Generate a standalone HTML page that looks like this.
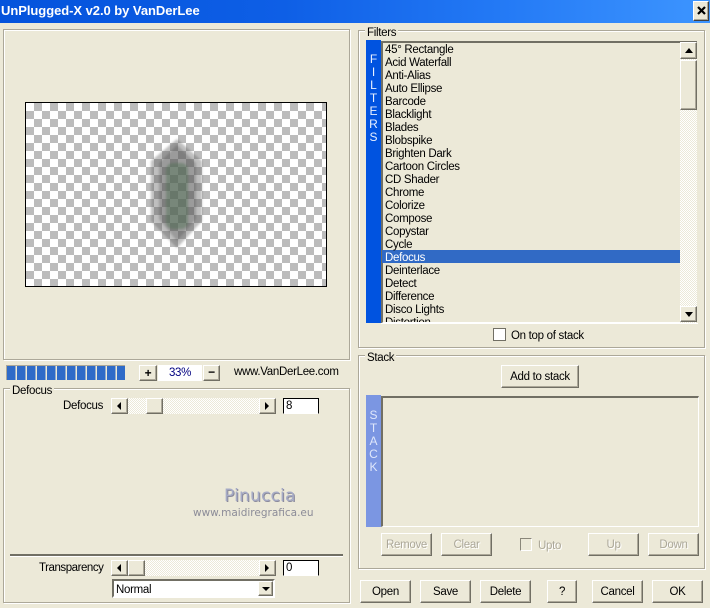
<!DOCTYPE html>
<html><head><meta charset="utf-8"><style>
html,body{margin:0;padding:0}
body{width:710px;height:608px;background:#ece9d8;position:relative;overflow:hidden;font:11.5px/13px "Liberation Sans",sans-serif;letter-spacing:-.3px;color:#000}
div,span{position:absolute;box-sizing:border-box;white-space:nowrap}
.g{border:1px solid #aca899;box-shadow:inset 1px 1px 0 #fff,1px 1px 0 #fff}
.lg{background:#ece9d8;padding:0 2px;height:13px}
.b{background:#ece9d8;border:1px solid;border-color:#fff #716f64 #716f64 #fff;box-shadow:inset -1px -1px 0 #aca899;text-align:center}
.d{color:#aca899;text-shadow:1px 1px 0 #fff}
.track{background:repeating-conic-gradient(#fff 0 25%,#ece9d8 0 50%) 0 0/2px 2px}
.in{background:#fff;border:1px solid;border-color:#000 #000 #fff #000}
.i{left:385px;height:13px;line-height:13px}
svg{position:absolute;left:0;top:0}
</style></head><body>
<div style="left:0;top:0;width:710px;height:23px;background:linear-gradient(90deg,#0453dc 0,#0e5fe6 40%,#2379f5 70%,#3d95ff 100%)"></div>
<div style="left:1px;top:3px;color:#fff;font:bold 13px/15px 'Liberation Sans',sans-serif;letter-spacing:-.05px">UnPlugged-X v2.0 by VanDerLee</div>
<div class="b" style="left:693px;top:1px;width:16px;height:20px;border-color:#fff #404040 #404040 #fff"></div>
<svg width="710" height="23" style="z-index:2"><path d="M698 7l7 7M705 7l-7 7" stroke="#000" stroke-width="2.2" fill="none"/></svg>

<div class="g" style="left:3px;top:29px;width:347px;height:331px"></div>
<div style="left:25px;top:102px;width:302px;height:185px;border:1px solid #000;background:repeating-conic-gradient(#bcbcbc 0 25%,#fff 0 50%) 0 0/16px 16px;background-color:#fff;overflow:hidden">
<svg width="300" height="183"><defs><filter id="f" x="-30%" y="-30%" width="160%" height="160%"><feGaussianBlur stdDeviation="1"/></filter><filter id="h" x="-30%" y="-30%" width="160%" height="160%"><feGaussianBlur stdDeviation="1"/></filter></defs>
<path d="M151 36L125 58V118L151 145L176 118V58Z" fill="#5a5a5a" opacity=".38" filter="url(#h)"/>
<path d="M151 42L133 60V116L151 138L170 116V60Z" fill="#4a4a4a" opacity=".3" filter="url(#f)"/>
<rect x="140" y="60" width="22" height="66" rx="7" fill="#4f6f52" opacity=".45" filter="url(#f)"/>
</svg></div>

<div style="left:6px;top:365px;width:119px;height:15px;background:#fff;box-shadow:inset 1px 1px 0 #aca899"></div>
<div style="left:7px;top:366px;width:118px;height:14px;background:repeating-linear-gradient(90deg,#2f6bc8 0 8.500px,#ece9d8 8.500px 10px)"></div>
<div class="b" style="left:139px;top:365px;width:18px;height:16px;font:bold 12px/14px 'Liberation Sans',sans-serif">+</div>
<div style="left:158px;top:365px;width:44px;height:16px;background:#fff;color:#000080;text-align:center;line-height:16px">33%</div>
<div class="b" style="left:203px;top:365px;width:17px;height:16px;font:bold 12px/13px 'Liberation Sans',sans-serif">−</div>
<div style="left:234px;top:366px">www.VanDerLee.com</div>

<div class="g" style="left:3px;top:388px;width:347px;height:215px"></div>
<div class="lg" style="left:10px;top:385px">Defocus</div>
<div style="left:63px;top:400px">Defocus</div>
<div class="track" style="left:128px;top:398px;width:131px;height:16px"></div>
<div class="b" style="left:111px;top:398px;width:17px;height:16px"></div>
<div class="b" style="left:146px;top:398px;width:17px;height:16px"></div>
<div class="b" style="left:259px;top:398px;width:17px;height:16px"></div>
<div class="in" style="left:283px;top:398px;width:36px;height:16px;padding-left:2px;line-height:15px">8</div>

<div style="left:224px;top:486px;color:#a6abc6;font:17px/20px 'DejaVu Sans',sans-serif;letter-spacing:.2px;text-shadow:1px 1px 0 #8a8a9c">Pinuccia</div>
<div style="left:193px;top:507px;color:#8c8c98;font:10.5px/13px 'DejaVu Sans',sans-serif;letter-spacing:0">www.maidiregrafica.eu</div>

<div style="left:10px;top:554px;width:333px;height:2px;background:#716f64;box-shadow:0 1px 0 #fff"></div>
<div style="left:39px;top:562px;letter-spacing:-.45px">Transparency</div>
<div class="track" style="left:128px;top:560px;width:131px;height:16px"></div>
<div class="b" style="left:111px;top:560px;width:17px;height:16px"></div>
<div class="b" style="left:128px;top:560px;width:17px;height:16px"></div>
<div class="b" style="left:259px;top:560px;width:17px;height:16px"></div>
<div class="in" style="left:283px;top:560px;width:36px;height:16px;padding-left:2px;line-height:15px">0</div>
<div style="left:112px;top:579px;width:163px;height:19px;background:#fff;border:2px solid;border-color:#716f64 #fff #fff #716f64;padding-left:2px;line-height:18px">Normal</div>
<div class="b" style="left:258px;top:581px;width:15px;height:15px"></div>

<div class="g" style="left:358px;top:30px;width:347px;height:318px"></div>
<div class="lg" style="left:365px;top:26px;line-height:15px">Filters</div>
<div style="left:366px;top:40px;width:15px;height:283px;background:#0053e0"></div>
<div style="left:366px;top:53px;width:15px;color:#e8f0ff;text-align:center;font-size:12px;line-height:13px;white-space:normal;letter-spacing:0">F<br>I<br>L<br>T<br>E<br>R<br>S</div>
<div style="left:381px;top:41px;width:316px;height:283px;border:2px solid;border-color:#716f64 #ece9d8 #fff #716f64;border-right:0;overflow:hidden"></div>
<div style="left:382px;top:250px;width:298px;height:13px;background:#316ac5"></div>
<div style="left:0;top:0;width:697px;height:322px;overflow:hidden">
<div class="i" style="top:44px">45° Rectangle</div><div class="i" style="top:57px">Acid Waterfall</div><div class="i" style="top:70px">Anti-Alias</div><div class="i" style="top:83px">Auto Ellipse</div><div class="i" style="top:96px">Barcode</div><div class="i" style="top:109px">Blacklight</div><div class="i" style="top:122px">Blades</div><div class="i" style="top:135px">Blobspike</div><div class="i" style="top:148px">Brighten Dark</div><div class="i" style="top:161px">Cartoon Circles</div><div class="i" style="top:174px">CD Shader</div><div class="i" style="top:187px">Chrome</div><div class="i" style="top:200px">Colorize</div><div class="i" style="top:213px">Compose</div><div class="i" style="top:226px">Copystar</div><div class="i" style="top:239px">Cycle</div><div class="i" style="top:252px;color:#fff">Defocus</div><div class="i" style="top:265px">Deinterlace</div><div class="i" style="top:278px">Detect</div><div class="i" style="top:291px">Difference</div><div class="i" style="top:304px">Disco Lights</div><div class="i" style="top:317px">Distortion</div>
</div>
<div class="track" style="left:680px;top:42px;width:17px;height:281px"></div>
<div class="b" style="left:680px;top:42px;width:17px;height:17px"></div>
<div class="b" style="left:680px;top:60px;width:17px;height:50px"></div>
<div class="b" style="left:680px;top:306px;width:17px;height:16px"></div>
<div style="left:381px;top:323px;width:317px;height:1px;background:#fff"></div>
<div style="left:493px;top:328px;width:13px;height:13px;background:#fff;border:1px solid #716f64"></div>
<div style="left:511px;top:330px">On top of stack</div>

<div class="g" style="left:358px;top:355px;width:347px;height:214px"></div>
<div class="lg" style="left:365px;top:351px;line-height:15px">Stack</div>
<div class="b" style="left:501px;top:365px;width:78px;height:23px;line-height:22px">Add to stack</div>
<div style="left:366px;top:395px;width:15px;height:132px;background:#7b96e2"></div>
<div style="left:366px;top:409px;width:15px;color:#dfe7fb;text-align:center;font-size:12px;line-height:13px;white-space:normal;letter-spacing:0">S<br>T<br>A<br>C<br>K</div>
<div style="left:381px;top:396px;width:318px;height:131px;border:2px solid;border-color:#716f64 #fff #fff #716f64;border-width:2px 1px 1px 2px"></div>
<div class="b d" style="left:381px;top:533px;width:51px;height:23px;line-height:22px">Remove</div>
<div class="b d" style="left:441px;top:533px;width:51px;height:23px;line-height:22px">Clear</div>
<div style="left:520px;top:538px;width:12px;height:13px;border:1px solid #aca899;border-color:#8a877a #fff #fff #8a877a"></div>
<div class="d" style="left:538px;top:539px;line-height:15px">Upto</div>
<div class="b d" style="left:588px;top:533px;width:51px;height:23px;line-height:22px">Up</div>
<div class="b d" style="left:648px;top:533px;width:51px;height:23px;line-height:22px">Down</div>

<div class="b" style="left:360px;top:580px;width:51px;height:23px;line-height:22px">Open</div>
<div class="b" style="left:420px;top:580px;width:51px;height:23px;line-height:22px">Save</div>
<div class="b" style="left:480px;top:580px;width:51px;height:23px;line-height:22px">Delete</div>
<div class="b" style="left:547px;top:580px;width:30px;height:23px;line-height:22px">?</div>
<div class="b" style="left:592px;top:580px;width:51px;height:23px;line-height:22px">Cancel</div>
<div class="b" style="left:652px;top:580px;width:51px;height:23px;line-height:22px">OK</div>

<svg width="710" height="608" style="z-index:3;pointer-events:none">
<path d="M121 402v8l-4-4zM265 402v8l4-4zM121 564v8l-4-4zM265 564v8l4-4zM685 53h8l-4-5zM685 312h8l-4 5zM262 587h8l-4 4z" fill="#000"/>
</svg>
</body></html>
